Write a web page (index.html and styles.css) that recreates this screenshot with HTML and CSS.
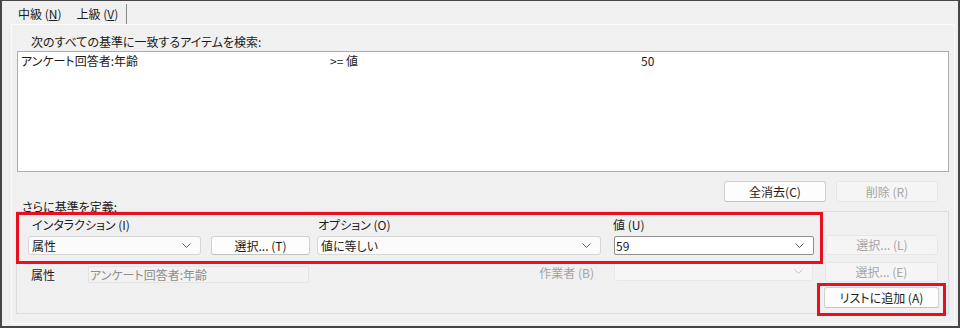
FILE: index.html
```html
<!DOCTYPE html>
<html lang="ja">
<head>
<meta charset="utf-8">
<link rel="stylesheet" href="styles.css">
</head>
<body>
<div class="win">
  <div class="tabs">
    <span class="tab">中級 (<u>N</u>)</span>
    <span class="tab tab-active">上級 (<u>V</u>)</span>
  </div>
  <div class="panel">
    <div class="lbl-find">次のすべての基準に一致するアイテムを検索:</div>
    <div class="list">
      <div class="list-row">
        <span class="c1">アンケート回答者:年齢</span>
        <span class="c2">&gt;= 値</span>
        <span class="c3">50</span>
      </div>
    </div>
    <div class="btn-row">
      <button class="btn btn-clear">全消去(C)</button>
      <button class="btn btn-del disabled">削除 (R)</button>
    </div>
    <div class="lbl-more">さらに基準を定義:</div>
    <div class="group">
      <div class="row-labels">
        <span class="l1">インタラクション (I)</span>
        <span class="l2">オプション (O)</span>
        <span class="l3">値 (U)</span>
      </div>
      <div class="row-controls">
        <div class="combo combo1"><span>属性</span><svg class="chev" width="9" height="5" viewBox="0 0 9 5"><polyline points="0.5,0.5 4.5,4.5 8.5,0.5" /></svg></div>
        <button class="btn btn-t">選択... (T)</button>
        <div class="combo combo2"><span>値に等しい</span><svg class="chev" width="9" height="5" viewBox="0 0 9 5"><polyline points="0.5,0.5 4.5,4.5 8.5,0.5" /></svg></div>
        <div class="combo combo3"><span>59</span><svg class="chev" width="9" height="5" viewBox="0 0 9 5"><polyline points="0.5,0.5 4.5,4.5 8.5,0.5" /></svg></div>
        <button class="btn btn-l disabled">選択... (L)</button>
      </div>
      <div class="row-attr">
        <span class="attr-lbl">属性</span>
        <div class="attr-box">アンケート回答者:年齢</div>
        <span class="worker-lbl">作業者 (B)</span>
        <div class="combo combo4 disabled"><span></span><svg class="chev" width="9" height="5" viewBox="0 0 9 5"><polyline points="0.5,0.5 4.5,4.5 8.5,0.5" /></svg></div>
        <button class="btn btn-e disabled">選択... (E)</button>
      </div>
      <div class="row-add">
        <button class="btn btn-add">リストに追加 (A)</button>
      </div>
    </div>
  </div>
  <div class="hl hl1"></div>
  <div class="hl hl2"></div>
</div>
</body>
</html>
```
FILE: styles.css
```css
* { box-sizing: border-box; }
body { margin: 0; }
.win {
  position: relative;
  width: 960px;
  height: 328px;
  border: 2px solid #464646;
  border-top-width: 1px;
  background: #f0f0f0;
  font-family: "Noto Sans CJK JP", "Noto Sans", sans-serif;
  font-size: 12px;
  font-feature-settings: "palt";
  color: #1b1b1b;
  overflow: hidden;
}
.tabs {
  display: flex;
  align-items: flex-end;
  height: 23px;
  padding-left: 16px;
}
.tab {
  line-height: 20px;
  height: 20px;
}
.tab u { text-decoration: underline; text-underline-offset: 1px; }
.tab-active {
  margin-left: 15px;
  padding-right: 8px;
  border-right: 1px solid #8a8a8a;
}
.panel {
  margin: 0 3px 0 9px;
  height: 300px;
  border: 1px solid #fafafa;
}
.lbl-find {
  margin-top: 10px;
  padding-left: 19px;
  line-height: 14px;
}
.list {
  margin: 2px 0 0 5px;
  width: 932px;
  height: 121px;
  background: #fff;
  border: 1px solid #adadad;
}
.list-row {
  display: flex;
  line-height: 16px;
  padding: 1px 0 0 3px;
}
.c1 { width: 309px; }
.c2 { width: 311px; }
.btn {
  font: inherit;
  font-feature-settings: "palt";
  color: #1b1b1b;
  background: #fdfdfd;
  border: 1px solid #d0d0d0;
  border-bottom-color: #c2c2c2;
  border-radius: 3px;
  padding: 0;
  height: 21px;
  line-height: 18px;
}
.btn.disabled {
  background: #f5f5f5;
  border-color: #e6e6e6;
  color: #a5a5a5;
}
.btn-row {
  display: flex;
  justify-content: flex-end;
  gap: 10px;
  margin-top: 9px;
  padding-right: 16px;
}
.btn-clear, .btn-del { width: 102px; }
.lbl-more {
  margin-top: -1px;
  padding-left: 10px;
  line-height: 12px;
  height: 12px;
}
.group {
  margin: -2px 0 0 4px;
  width: 933px;
  height: 103px;
  border: 1px solid #dcdcdc;
}
.row-labels {
  display: flex;
  margin-top: 6px;
  line-height: 13px;
}
.l1 { margin-left: 15px; width: 286px; }
.l2 { width: 295px; }
.row-controls {
  display: flex;
  align-items: flex-start;
  margin-top: 4px;
}
.combo {
  display: flex;
  align-items: center;
  justify-content: space-between;
  height: 19px;
  margin-top: 1px;
  padding: 0 9px 0 3px;
  background: #fbfbfb;
  border: 1px solid #d6d6d6;
  border-radius: 3px;
  line-height: 16px;
}
.chev polyline { fill: none; stroke: #606060; stroke-width: 1; }
.combo1 { margin-left: 11px; width: 173px; }
.btn-t { margin-left: 10px; width: 99px; height: 19px; margin-top: 1px; line-height: 16px; }
.combo2 { margin-left: 7px; width: 284px; }
.combo3 {
  margin-left: 13px;
  width: 200px;
  background: #fff;
  border-color: #8f8f8f;
  border-radius: 2px;
  padding-left: 1px;
}
.btn-l { margin-left: 12px; width: 112px; height: 20px; }
.row-attr {
  display: flex;
  align-items: flex-start;
  margin-top: 7px;
  height: 21px;
}
.attr-lbl {
  margin: 6px 0 0 14px;
  width: 57px;
  line-height: 14px;
}
.attr-box {
  margin-top: 4px;
  width: 221px;
  height: 17px;
  border: 1px solid #e4e4e4;
  background: #f2f2f2;
  color: #8e8e8e;
  line-height: 15px;
  padding-left: 1px;
}
.worker-lbl {
  width: 285px;
  text-align: right;
  color: #a3a3a3;
  margin-top: 4px;
  line-height: 14px;
}
.combo4 {
  margin: 0 0 0 20px;
  width: 199px;
  background: #f6f6f6;
  border-color: #e8e8e8;
}
.combo4 .chev polyline { stroke: #c4c4c4; }
.btn-e { margin-left: 12px; width: 113px; height: 20px; }
.row-add {
  display: flex;
  justify-content: flex-end;
  padding-right: 9px;
  margin-top: 4px;
}
.btn-add { width: 115px; height: 21px; }
.hl {
  position: absolute;
  border: 3px solid #e8101e;
}
.hl1 { left: 14px; top: 211px; width: 807px; height: 52px; }
.hl2 { left: 815px; top: 282px; width: 129px; height: 33px; }
```
